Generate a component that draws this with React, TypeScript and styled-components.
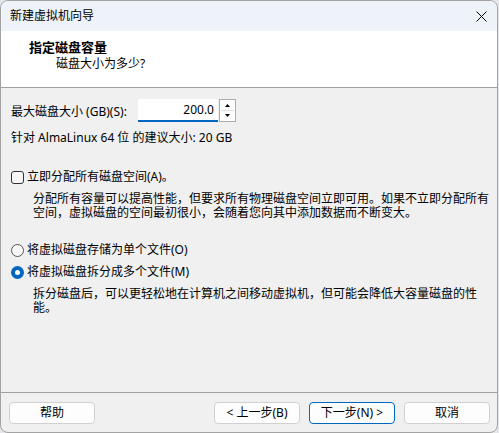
import React, { FC } from 'react';
import styled, { createGlobalStyle } from 'styled-components';

const GlobalStyle = createGlobalStyle`
  html, body {
    margin: 0;
    padding: 0;
    background: #e4e6ea;
  }

  * {
    box-sizing: border-box;
  }
`;

const Window = styled.div`
  display: flex;
  flex-direction: column;

  width: 498px;
  height: 433px;
  border: 1px solid #a3a3a3;
  border-radius: 8px;
  overflow: hidden;

  font-family: 'Noto Sans', 'Noto Sans CJK SC', sans-serif;
  font-size: 12px;
  color: #000;
  background-color: #f0f0f0;
`;

const TitleBar = styled.div`
  display: flex;
  justify-content: space-between;
  align-items: center;

  height: 30px;
  padding: 0 8px 0 9px;

  background-color: #eef2f9;
  line-height: 16px;
`;

const CloseButton = styled.div`
  display: flex;
  align-items: center;
  justify-content: center;
  width: 16px;
  height: 16px;
`;

const Header = styled.div`
  display: flex;
  flex-direction: column;

  height: 57px;
  padding: 8px 0 0 28px;
  border-bottom: 1px solid #a0a0a0;

  background-color: #fff;

  .title {
    font-size: 13px;
    font-weight: 700;
    line-height: 17px;
  }

  .subtitle {
    padding-left: 27px;
    line-height: 16px;
  }
`;

const Body = styled.div`
  display: flex;
  flex-direction: column;
  flex: 1;

  padding: 11px 4px 0 10px;
  white-space: nowrap;
`;

const SizeRow = styled.div`
  display: flex;
  align-items: center;
  height: 23px;

  .label {
    width: 127px;
  }
`;

const NumberInput = styled.div`
  display: flex;
  align-items: center;
  justify-content: flex-end;

  width: 80px;
  height: 23px;
  padding-right: 4px;
  border-bottom: 2px solid #0067c0;

  background-color: #fff;
`;

const Spinner = styled.div`
  display: flex;
  flex-direction: column;

  width: 17px;
  height: 23px;
  margin-left: 1px;
  padding: 1px;
  border: 1px solid #adadad;

  background-color: #fff;
`;

const SpinButton = styled.div`
  display: flex;
  align-items: center;
  justify-content: center;
  flex: 1;

  background-color: #fdfdfd;

  & + & {
    border-top: 1px solid #e0e0e0;
  }
`;

const Hint = styled.div`
  margin-top: 8px;
  line-height: 16px;
`;

const OptionRow = styled.label<{ $gap: number }>`
  display: flex;
  align-items: center;
  gap: 3px;

  height: 16px;
  margin-top: ${({ $gap }) => $gap}px;
  line-height: 16px;
`;

const CheckBox = styled.span`
  display: inline-block;
  width: 13px;
  height: 13px;
  border: 1px solid #333;
  border-radius: 3px;

  background-color: #f7f7f7;
`;

const Radio = styled.span<{ $checked?: boolean }>`
  display: inline-flex;
  align-items: center;
  justify-content: center;

  width: 13px;
  height: 13px;
  border-radius: 50%;
  border: ${({ $checked }) => ($checked ? 'none' : '1px solid #555')};

  background-color: ${({ $checked }) => ($checked ? '#0067c0' : '#f7f7f7')};

  &::after {
    content: '';
    display: ${({ $checked }) => ($checked ? 'block' : 'none')};
    width: 5px;
    height: 5px;
    border-radius: 50%;
    background-color: #fff;
  }
`;

const Description = styled.p`
  margin: 7px 0 0 0;
  padding-left: 22px;
  line-height: 14px;
`;

const Footer = styled.div`
  display: flex;
  align-items: flex-start;
  gap: 9px;

  height: 40px;
  padding: 9px 7px 0 8px;
  border-top: 1px solid #a0a0a0;

  .spacer {
    flex: 1;
  }
`;

const Button = styled.button<{ $primary?: boolean }>`
  width: 86px;
  height: 22px;
  padding: 0;
  border: 1px solid ${({ $primary }) => ($primary ? '#0067c0' : '#d0d0d0')};
  border-radius: 4px;

  font-family: inherit;
  font-size: 12px;
  line-height: 16px;
  color: #000;
  background-color: #fdfdfd;
`;

const Arrow: FC<{ down?: boolean }> = ({ down }) => (
  <svg width="5" height="3" viewBox="0 0 5 3">
    <path d={down ? 'M0 0H5L2.5 3Z' : 'M0 3H5L2.5 0Z'} fill="#000" />
  </svg>
);

const App: FC = () => {
  return (
    <>
      <GlobalStyle />
      <Window>
        <TitleBar>
          <span>新建虚拟机向导</span>
          <CloseButton>
            <svg width="11" height="11" viewBox="0 0 11 11">
              <path d="M0.5 0.5L10.5 10.5M10.5 0.5L0.5 10.5" stroke="#000" strokeWidth="1" />
            </svg>
          </CloseButton>
        </TitleBar>
        <Header>
          <span className="title">指定磁盘容量</span>
          <span className="subtitle">磁盘大小为多少?</span>
        </Header>
        <Body>
          <SizeRow>
            <span className="label">最大磁盘大小 (GB)(S):</span>
            <NumberInput>200.0</NumberInput>
            <Spinner>
              <SpinButton>
                <Arrow />
              </SpinButton>
              <SpinButton>
                <Arrow down />
              </SpinButton>
            </Spinner>
          </SizeRow>
          <Hint>针对 AlmaLinux 64 位 的建议大小: 20 GB</Hint>

          <OptionRow $gap={23}>
            <CheckBox />
            <span>立即分配所有磁盘空间(A)。</span>
          </OptionRow>
          <Description>
            分配所有容量可以提高性能，但要求所有物理磁盘空间立即可用。如果不立即分配所有
            <br />
            空间，虚拟磁盘的空间最初很小，会随着您向其中添加数据而不断变大。
          </Description>

          <OptionRow $gap={22}>
            <Radio />
            <span>将虚拟磁盘存储为单个文件(O)</span>
          </OptionRow>
          <OptionRow $gap={6}>
            <Radio $checked />
            <span>将虚拟磁盘拆分成多个文件(M)</span>
          </OptionRow>
          <Description>
            拆分磁盘后，可以更轻松地在计算机之间移动虚拟机，但可能会降低大容量磁盘的性
            <br />
            能。
          </Description>
        </Body>
        <Footer>
          <Button>帮助</Button>
          <div className="spacer" />
          <Button>&lt; 上一步(B)</Button>
          <Button $primary>下一步(N) &gt;</Button>
          <Button>取消</Button>
        </Footer>
      </Window>
    </>
  );
};

export default App;
